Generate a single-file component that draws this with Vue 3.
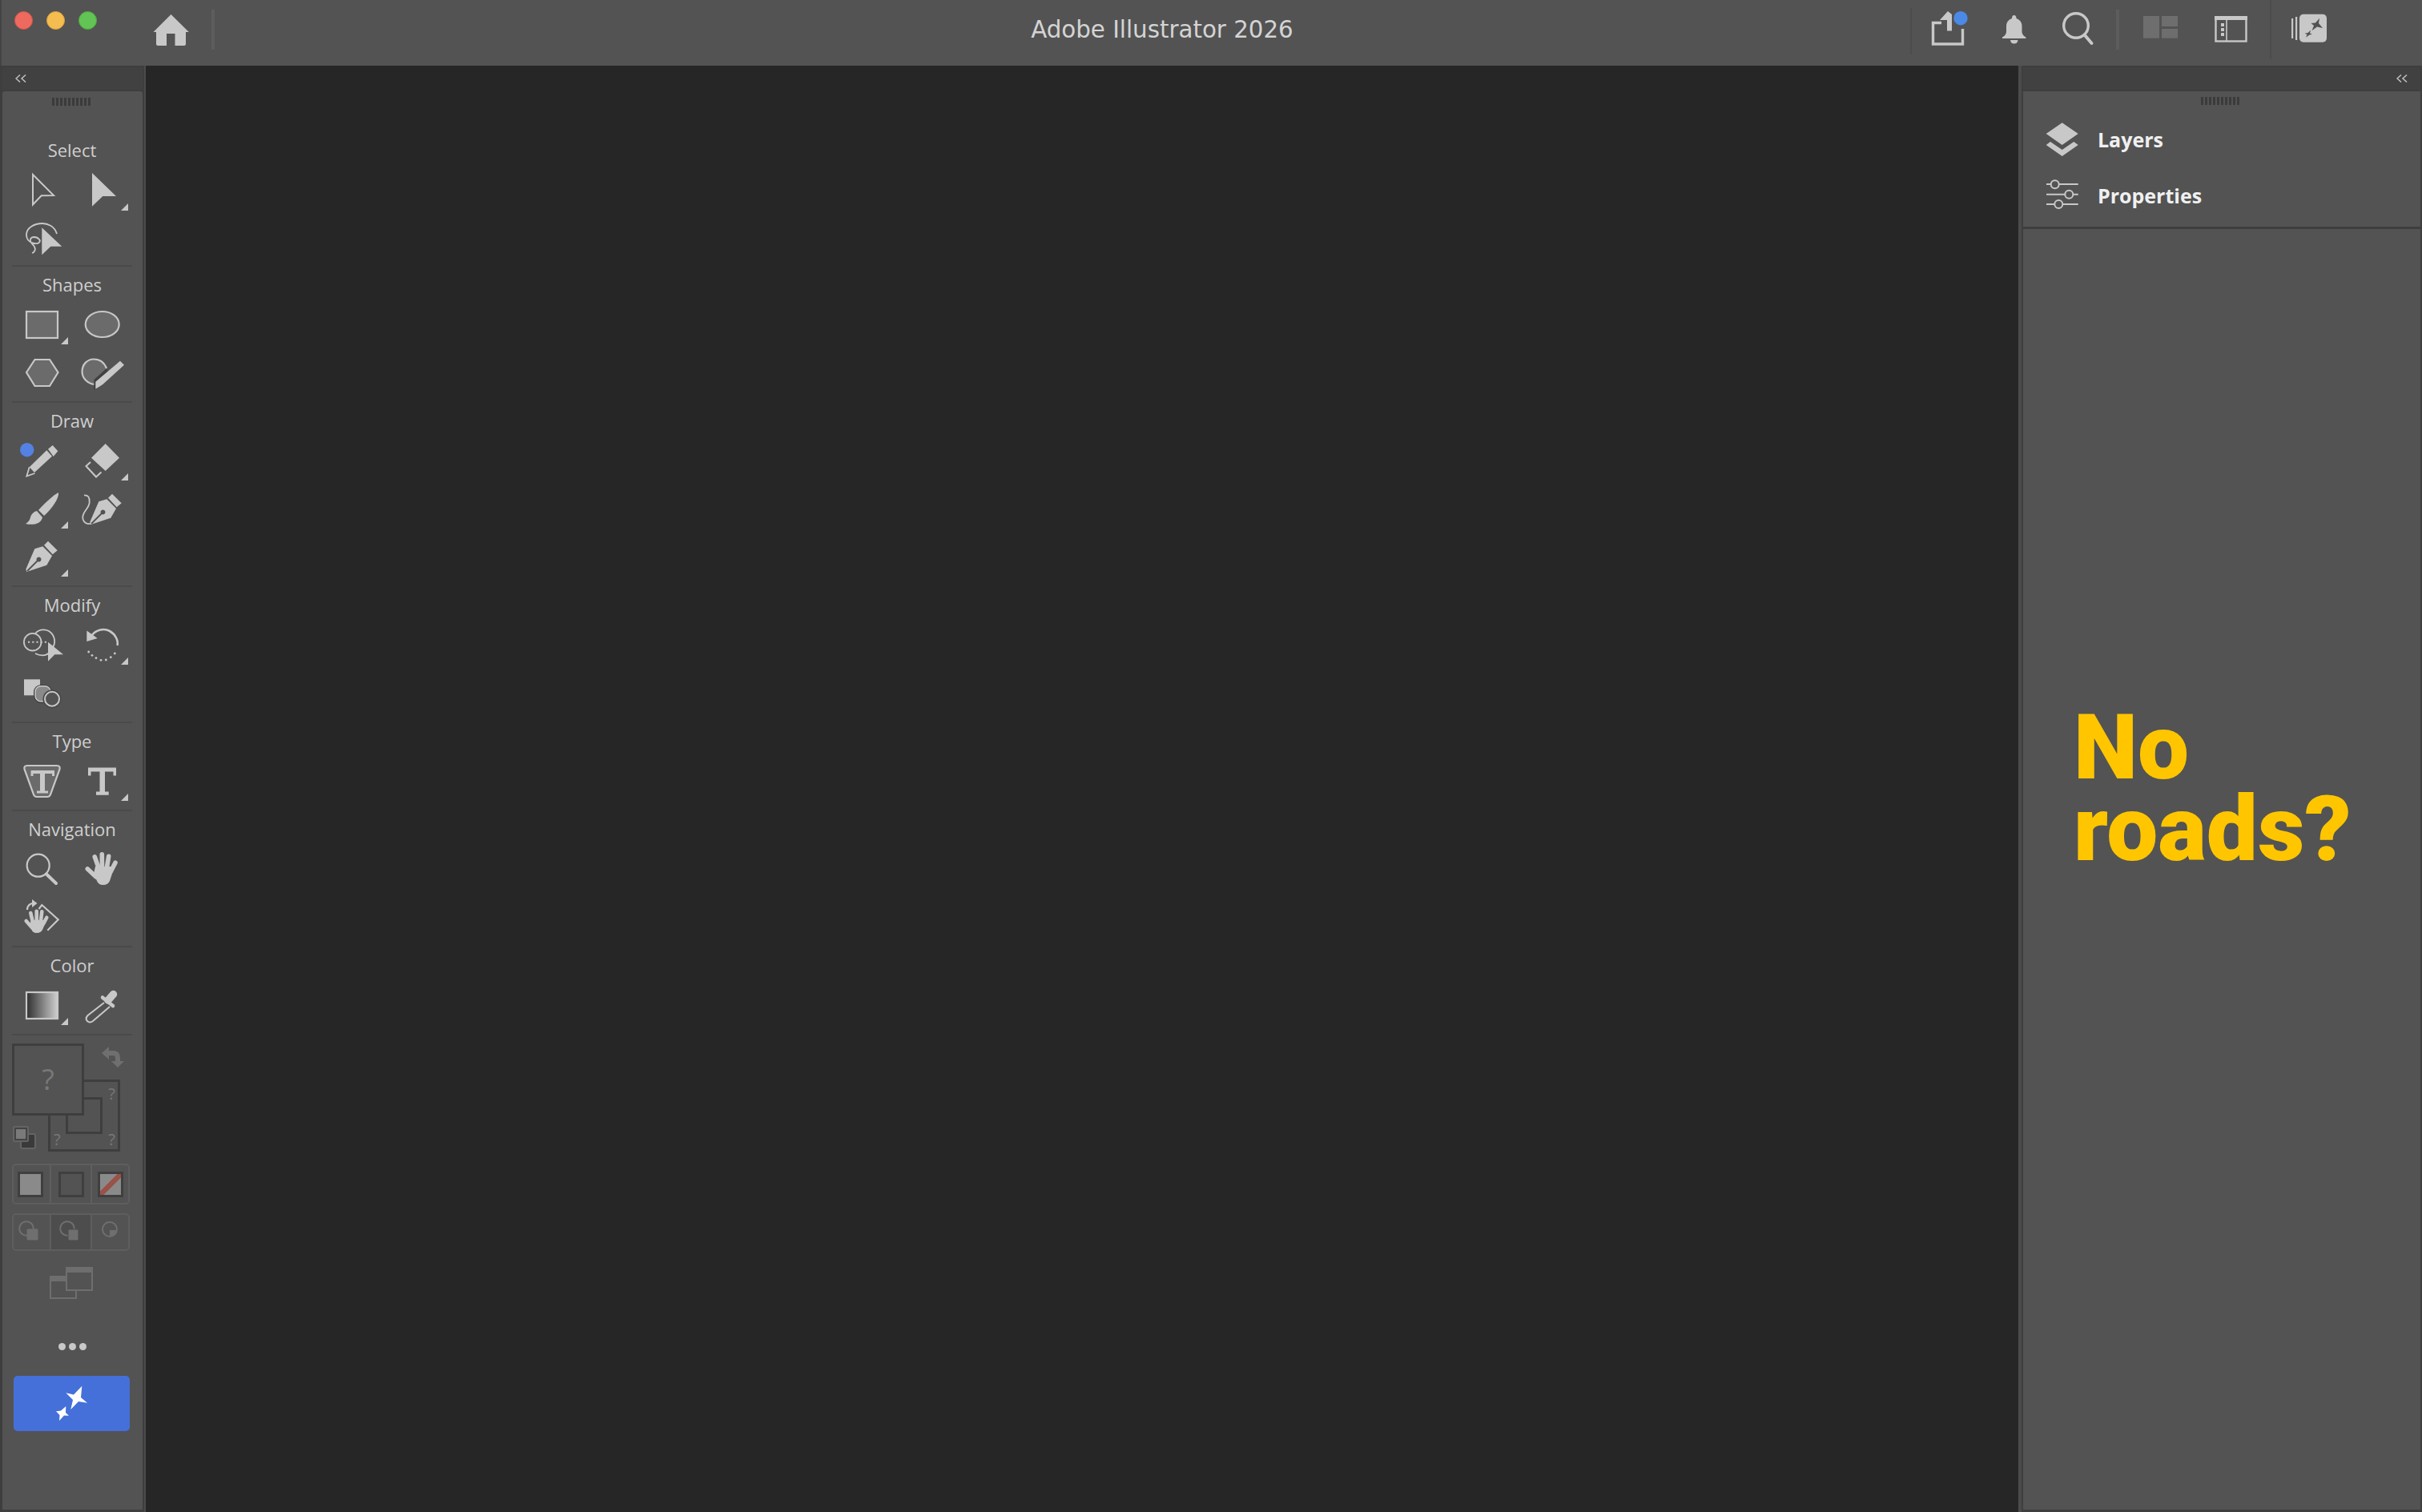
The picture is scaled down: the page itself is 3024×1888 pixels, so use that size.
<script setup>
const lights = ['red', 'amber', 'green']
const rotateDots = [
  [53.3, 41], [48.3, 45.7], [42.3, 49], [36, 49.3], [30, 46.7], [25, 43.3], [20.7, 39]
]
</script>

<template>
  <div class="app">
    <header class="topbar">
      <div class="lights">
        <span v-for="l in lights" :key="l" :class="['light', l]"></span>
      </div>
      <svg class="home" viewBox="190 16 48 42" width="48" height="42">
        <path class="fill" d="M213.5 18 L235.8 40 L232 40 L232 55 Q232 57 230 57 L218.5 57 L218.5 42 L208 42 L208 57 L197 57 Q195 57 195 55 L195 40 L191.5 40 Z" />
      </svg>
      <span class="bar-sep"></span>
      <div class="title">Adobe Illustrator 2026</div>
      <div class="bar-right">
        <span class="faint-sep"></span>
        <svg class="ic share" viewBox="2405 10 55 50" width="55" height="50">
          <path class="line" stroke-width="3.4" fill="none" d="M2424 28.5 L2413.5 28.5 L2413.5 55 L2450.5 55 L2450.5 36" />
          <path class="fill" d="M2432 14 L2437 18 L2437 38.5 L2431 38.5 L2431 25 L2422 25 Z" />
          <circle cx="2448" cy="22.7" r="8.7" fill="#4a8ae6" />
        </svg>
        <svg class="ic bell" viewBox="2495 12 40 48" width="40" height="48">
          <path class="fill" d="M2514.7 19 Q2517.5 19 2517.5 23 Q2524.5 25.5 2524.5 33 L2524.5 40 Q2525 44 2529.4 46.5 L2529.4 48 L2500 48 L2500 46.5 Q2504.4 44 2505 40 L2505 33 Q2505 25.5 2512 23 Q2512 19 2514.7 19 Z" />
          <path class="fill" d="M2510 50 L2519.5 50 Q2519 54.5 2514.7 54.5 Q2510.5 54.5 2510 50 Z" />
        </svg>
        <svg class="ic search" viewBox="2570 12 46 48" width="46" height="48">
          <circle class="line" cx="2592" cy="32" r="15.3" stroke-width="3.4" fill="none" />
          <path class="line" stroke-width="4" stroke-linecap="round" fill="none" d="M2603 44 L2611.5 54" />
        </svg>
        <span class="bar-sep second"></span>
        <svg class="ic layout" viewBox="2672 15 50 38" width="50" height="38">
          <rect x="2676" y="20" width="20" height="27.7" />
          <rect x="2699" y="20" width="20" height="13" />
          <rect x="2699" y="36" width="20" height="11.7" />
        </svg>
        <svg class="ic window" viewBox="2760 15 50 42" width="50" height="42">
          <rect class="line" x="2766.5" y="21.5" width="38" height="30" stroke-width="2.4" fill="none" />
          <rect class="fill" x="2765" y="20" width="41" height="5" />
          <path class="line" stroke-width="1.6" fill="none" d="M2780 25 L2780 51" />
          <rect class="fill" x="2773" y="29" width="4" height="4" />
          <rect class="fill" x="2773" y="35" width="4" height="4" />
          <rect class="fill" x="2773" y="41" width="4" height="4" />
        </svg>
        <span class="faint-sep tall"></span>
        <svg class="ic sparkle" viewBox="2858 12 50 46" width="50" height="46">
          <rect class="fill" x="2861" y="23" width="2.2" height="25" />
          <rect class="fill" x="2866" y="21" width="2.2" height="29" />
          <rect class="fill" x="2871" y="17.7" width="34" height="35" rx="5" />
          <path fill="#535353" d="M2896 22.7 L2895 29 L2900 35 L2893 33.5 L2886.5 38.3 L2889 32 L2885.5 29 L2891 28.5 Z" />
          <path fill="#535353" d="M2885 37.7 L2884 41.5 L2887 42.7 L2883.5 43.5 L2879 46.7 L2880.5 43 L2877.6 41.7 L2881.5 41 Z" />
        </svg>
      </div>
    </header>

    <main class="main">
      <aside class="dock left">
        <div class="strip">
          <svg class="chev" viewBox="0 0 14 10" width="14" height="10">
            <path d="M6 0.5 L1 5 L6 9.5 M13 0.5 L8 5 L13 9.5" />
          </svg>
        </div>
        <div class="panel tools">
          <div class="grip"></div>

          <section class="group first">
            <h3>Select</h3>
            <div class="grid">
              <div class="tool">
                <svg viewBox="0 0 75 60"><path class="line" fill="none" stroke-width="2" d="M26 10 L52 36 L36.7 36.3 L26 47.5 Z" /></svg>
              </div>
              <div class="tool corner">
                <svg viewBox="0 0 75 60"><path class="fill" d="M25 8 L55 37 L38.3 37 L25 49.7 Z" /></svg>
              </div>
              <div class="tool">
                <svg viewBox="0 0 75 60">
                  <path class="line" fill="none" stroke-width="1.8" d="M56 24 C53 14 44 11 38 11 C27 11 18 17 18 25 C18 31 22 35 28 36 C34 37 36 33 34 31 C31 27 24 27 23 31 C22 35 26 37 28 40 C30 44 28 47 25 48" />
                  <path class="fill" d="M37.3 16.3 L62.3 39.7 L48.3 39.7 L37.3 50.3 Z" />
                </svg>
              </div>
            </div>
          </section>

          <section class="group">
            <h3>Shapes</h3>
            <div class="grid">
              <div class="tool corner">
                <svg viewBox="0 0 75 60"><rect class="shape" x="18" y="14" width="39" height="33" /></svg>
              </div>
              <div class="tool">
                <svg viewBox="0 0 75 60"><ellipse class="shape" cx="37.7" cy="30" rx="21" ry="16" /></svg>
              </div>
              <div class="tool">
                <svg viewBox="0 0 75 60"><path class="shape" d="M18 30 L28.5 14 L47 14 L57.5 30 L47 47 L28.5 47 Z" /></svg>
              </div>
              <div class="tool">
                <svg viewBox="0 0 75 60">
                  <path class="shape" d="M43 25 C40 17 34 13.5 27 13.5 C19 13.5 12.5 20 12.5 29 C12.5 38 20 44 28 45" />
                  <path fill="#404040" d="M43 25 L27.5 39 L27 52 L32 50 L45 31 Z" />
                  <path class="fill" d="M60 15.7 L65 20.7 L38.3 45 L29.3 50.7 L29.3 41.7 Z" />
                </svg>
              </div>
            </div>
          </section>

          <section class="group">
            <h3>Draw</h3>
            <div class="grid">
              <div class="tool">
                <svg viewBox="0 0 75 60">
                  <path class="fill" d="M45 15.7 L50.7 11 L57.3 18.3 L51.7 25 Z" />
                  <path class="fill" d="M43.3 17.3 L50 24.7 L28 45 L21.7 38.3 Z" />
                  <path class="line" fill="none" stroke-width="1.8" d="M21.7 38.3 L18.3 49.5 L28.5 46" />
                  <circle cx="18.7" cy="16.7" r="8.7" fill="#5382e2" />
                </svg>
              </div>
              <div class="tool corner">
                <svg viewBox="0 0 75 60">
                  <path class="fill" d="M41.7 9 L59 26.7 L41.7 43 L24 26.7 Z" />
                  <path class="line" fill="none" stroke-width="2" d="M23 32 L17.5 37 L30 50.5 L36.5 44.5" />
                </svg>
              </div>
              <div class="tool corner">
                <svg viewBox="0 0 75 60">
                  <path class="fill" d="M58 10 C59 17 50 30 40 39 L33 32 C42 22 52 13 58 10 Z" />
                  <path class="fill" d="M31 33 C27 34 24 37 23 41 C22 45 20 47 17 49 C25 51 36 50 38 41 Z" />
                </svg>
              </div>
              <div class="tool">
                <svg viewBox="0 0 75 60">
                  <path class="line" fill="none" stroke-width="1.8" d="M15 13.3 C20 13 22 16 21.7 22 C21.5 30 13.3 33 13.3 41 C13.3 47 19 51 25 48.3" />
                  <g transform="translate(5 1)">
                    <path class="fill" d="M40 15.7 L45 10.7 L56.7 22.3 L50.7 27.3 Z" />
                    <path class="fill" fill-rule="evenodd" d="M38.3 17.3 L50 29 L43.3 40.7 L18.3 49 L17.3 45.7 L28.3 20.3 Z M33.5 30.5 A3 3 0 1 0 33.51 30.5 Z" />
                    <path stroke="#535353" stroke-width="1.8" d="M19 48 L32 35" />
                  </g>
                </svg>
              </div>
              <div class="tool corner">
                <svg viewBox="0 0 75 60">
                  <path class="fill" d="M40 15.7 L45 10.7 L56.7 22.3 L50.7 27.3 Z" />
                  <path class="fill" fill-rule="evenodd" d="M38.3 17.3 L50 29 L43.3 40.7 L18.3 49 L17.3 45.7 L28.3 20.3 Z M33.5 30.5 A3 3 0 1 0 33.51 30.5 Z" />
                  <path stroke="#535353" stroke-width="1.8" d="M19 48 L32 35" />
                </svg>
              </div>
            </div>
          </section>

          <section class="group">
            <h3>Modify</h3>
            <div class="grid">
              <div class="tool">
                <svg viewBox="0 0 75 60">
                  <path class="line" fill="none" stroke-width="1.8" d="M29 16 C35 9 46 10 51 18 C55 25 53 33 48 37 M47 40 C42 44 35 44 29 41" />
                  <circle cx="25.7" cy="26.7" r="10.8" fill="none" stroke="#c8c8c8" stroke-width="1.8" />
                  <path fill="none" stroke="#c8c8c8" stroke-width="2" stroke-dasharray="2.2 3" d="M20 26.7 L44 26.7" />
                  <path class="fill" d="M45 26.7 L64 42.3 L53.3 42.3 L45 50.7 Z" />
                </svg>
              </div>
              <div class="tool corner">
                <svg viewBox="0 0 75 60">
                  <path class="line" fill="none" stroke-width="2.6" d="M24 19 C30 11 40 9 47 13 C54 17 58 25 56.5 31" />
                  <path class="fill" d="M18.3 12.5 L18.3 26 L31.7 22 Z" />
                  <circle v-for="(d, i) in rotateDots" :key="i" class="fill" :cx="d[0]" :cy="d[1]" r="1.4" />
                </svg>
              </div>
              <div class="tool">
                <svg viewBox="0 0 75 60">
                  <rect class="fill" x="15" y="13.3" width="20" height="20" />
                  <rect x="27" y="20" width="23" height="23" rx="9" fill="#404040" />
                  <rect x="29" y="21.7" width="19" height="19" rx="7" fill="#8a8a8a" stroke="#c8c8c8" stroke-width="1.4" />
                  <circle cx="50" cy="37.7" r="11.5" fill="#474747" />
                  <circle cx="50" cy="37.7" r="9" fill="#535353" stroke="#c8c8c8" stroke-width="2" />
                </svg>
              </div>
            </div>
          </section>

          <section class="group">
            <h3>Type</h3>
            <div class="grid">
              <div class="tool">
                <svg viewBox="0 0 75 60">
                  <path class="shape" d="M19 11 L56 11 Q60.5 11 59.5 15.5 L48 47 Q47 50 44 50 L31 50 Q28 50 27 47 L15.5 15.5 Q14.5 11 19 11 Z" />
                  <path class="fill" d="M23.5 17 L53 17 L53 24 L50 24 L50 21 L41 21 L41 42.5 L45 42.5 L45 45.5 L31 45.5 L31 42.5 L35 42.5 L35 21 L26.5 21 L26.5 24 L23.5 24 Z" />
                </svg>
              </div>
              <div class="tool corner">
                <svg viewBox="0 0 75 60">
                  <path class="fill" d="M20 13.5 L55 13.5 L55 23.5 L51.5 23.5 L51.5 18.5 L41 18.5 L41 43.5 L45.7 43.5 L45.7 47.7 L30 47.7 L30 43.5 L34.5 43.5 L34.5 18.5 L23.5 18.5 L23.5 23.5 L20 23.5 Z" />
                </svg>
              </div>
            </div>
          </section>

          <section class="group">
            <h3>Navigation</h3>
            <div class="grid">
              <div class="tool">
                <svg viewBox="0 0 75 60">
                  <circle class="line" cx="32.7" cy="25.7" r="14" fill="none" stroke-width="2.2" />
                  <path class="line" fill="none" stroke-width="4" stroke-linecap="round" d="M43 36.5 L55 48" />
                </svg>
              </div>
              <div class="tool">
                <svg viewBox="0 0 75 60">
                  <g class="fingers" stroke-width="5.6">
                    <path d="M28.3 15 L33.3 29" />
                    <path d="M37.3 11.7 L37.5 29" />
                    <path d="M45.7 14.3 L43.3 29" />
                    <path d="M54 22.3 L48.3 33.3" />
                    <path d="M19.3 30 L30 40" />
                  </g>
                  <path class="fill" d="M29 27 L50 27 L51 33 L47 45 Q45 50 38.5 50 Q33 50 31 45 L27 36 Z" />
                </svg>
              </div>
              <div class="tool">
                <svg viewBox="0 0 75 60">
                  <path class="line" fill="none" stroke-width="2.2" d="M33.5 20 L37.3 15 L57.7 33.3 L44.3 46.7" />
                  <path class="line" fill="none" stroke-width="2.2" d="M19 21 C19 15 24 12 29 13" />
                  <path class="fill" d="M25 8 L31.5 13 L25 18 Z" />
                  <g class="fingers" stroke-width="4.6">
                    <path d="M23.3 25 L26 36.7" />
                    <path d="M30.7 22.7 L30.7 36.7" />
                    <path d="M37.3 23.3 L35.7 36.7" />
                    <path d="M43.3 30.7 L39.3 38.3" />
                    <path d="M17.7 35 L25 43.3" />
                  </g>
                  <path class="fill" d="M24 34 L41 34 L41.5 38 L38 46 Q36 50 30.7 50 Q26 50 24.5 46 L22 40 Z" />
                </svg>
              </div>
            </div>
          </section>

          <section class="group">
            <h3>Color</h3>
            <div class="grid">
              <div class="tool corner">
                <svg viewBox="0 0 75 60">
                  <defs>
                    <linearGradient id="grad" x1="0" x2="1" y1="0" y2="0">
                      <stop offset="0" stop-color="#2f2f2f" />
                      <stop offset="1" stop-color="#cfcfcf" />
                    </linearGradient>
                  </defs>
                  <rect x="18" y="14" width="39" height="33" fill="url(#grad)" stroke="#c8c8c8" stroke-width="2.2" />
                </svg>
              </div>
              <div class="tool">
                <svg viewBox="0 0 75 60">
                  <path class="line" fill="none" stroke-width="2" d="M40 27 L19.5 43 Q16 47 19 50 Q22 53 26 50 L47 32" />
                  <path class="line" fill="none" stroke-width="4.5" stroke-linecap="round" d="M38 20.5 L51 31" />
                  <path class="line" fill="none" stroke-width="9.5" stroke-linecap="round" d="M51.5 16.5 L45 24" />
                </svg>
              </div>
            </div>
          </section>

          <div class="swatches">
            <div class="fill-box">?</div>
            <div class="stroke-box">
              <span class="stroke-inner"></span>
              <span class="q q-tr">?</span>
              <span class="q q-bl">?</span>
              <span class="q q-br">?</span>
            </div>
            <svg class="swap" viewBox="0 0 28 28" width="28" height="28">
              <path fill="#6f6f6f" d="M0 9 L9 1 L9 6 L16 6 Q23 7 23 15 L23 19 L28 19 L20 27 L12 19 L17 19 L17 15 Q17 12 14 12 L9 12 L9 17 Z" />
            </svg>
            <svg class="defaults" viewBox="0 0 30 30" width="30" height="30">
              <rect x="11" y="11" width="18" height="18" rx="2" fill="#3a3a3a" stroke="#646464" stroke-width="2" />
              <rect x="1" y="1" width="20" height="20" rx="2" fill="#646464" />
              <rect x="4" y="4" width="14" height="14" fill="#7a7a7a" stroke="#444" stroke-width="2" />
            </svg>
          </div>

          <div class="seg modes">
            <div class="seg-cell"><span class="sw solid"></span></div>
            <div class="seg-cell"><span class="sw"></span></div>
            <div class="seg-cell"><span class="sw none"></span></div>
          </div>

          <div class="seg draws">
            <div class="seg-cell">
              <svg viewBox="0 0 40 40" width="40" height="40">
                <circle cx="15" cy="15" r="8.8" fill="none" stroke="#6f6f6f" stroke-width="2" />
                <rect x="15.5" y="15.5" width="14" height="14" rx="1" fill="#6f6f6f" />
              </svg>
            </div>
            <div class="seg-cell dark">
              <svg viewBox="0 0 40 40" width="40" height="40">
                <circle cx="15" cy="15" r="8.8" fill="none" stroke="#6f6f6f" stroke-width="2" />
                <rect x="16" y="16" width="13" height="14" rx="1" fill="#6f6f6f" stroke="#4c4c4c" stroke-width="1" />
              </svg>
            </div>
            <div class="seg-cell">
              <svg viewBox="0 0 40 40" width="40" height="40">
                <circle cx="19" cy="16" r="9" fill="none" stroke="#6f6f6f" stroke-width="2" />
                <path fill="#6f6f6f" d="M19 17 L27 17 Q27 23 19 25 Z" />
              </svg>
            </div>
          </div>

          <svg class="screens" viewBox="0 0 54 40" width="54" height="40">
            <rect x="1" y="12" width="32" height="27" fill="#535353" stroke="#6e6e6e" stroke-width="2" />
            <rect x="1" y="12" width="32" height="6" fill="#6e6e6e" />
            <rect x="21" y="1" width="32" height="28" fill="#535353" stroke="#6e6e6e" stroke-width="2" />
            <rect x="21" y="1" width="32" height="6" fill="#6e6e6e" />
          </svg>

          <div class="more"><span></span><span></span><span></span></div>

          <div class="gen">
            <svg viewBox="0 0 145 69" width="145" height="69">
              <path fill="#fff" d="M65.3 21.3 L75 23.5 L85.3 12.7 L84 27 L92 33.7 L81 32 L71.3 42 L74 30 Z" />
              <path fill="#fff" d="M53 44.3 L59 43.5 L65.3 38 L65 46 L69 49.7 L63 49.5 L57 56 L57.5 49 Z" />
            </svg>
          </div>
        </div>
      </aside>

      <div class="canvas"></div>

      <aside class="dock right">
        <div class="strip end">
          <svg class="chev" viewBox="0 0 14 10" width="14" height="10">
            <path d="M6 0.5 L1 5 L6 9.5 M13 0.5 L8 5 L13 9.5" />
          </svg>
        </div>
        <div class="panel collapsed">
          <div class="grip"></div>
          <div class="row">
            <svg viewBox="2553 150 44 46" width="44" height="46">
              <path class="fill" d="M2574.7 152.3 L2594.7 166 L2574.7 180 L2554.7 166 Z" />
              <path class="fill" d="M2554.7 180 L2560 176 L2574.7 186 L2589.3 176 L2594.7 180 L2574.7 194 Z" />
            </svg>
            <span>Layers</span>
          </div>
          <div class="row">
            <svg viewBox="2553 222 44 44" width="44" height="44">
              <g class="line" stroke-width="2" fill="none">
                <path d="M2555 230 L2560.5 230 M2571 230 L2594.7 230" />
                <path d="M2555 242.7 L2578 242.7 M2588.5 242.7 L2594.7 242.7" />
                <path d="M2555 255 L2565 255 M2575.5 255 L2594.7 255" />
                <circle cx="2565.7" cy="230.3" r="5" />
                <circle cx="2583.3" cy="242.7" r="5" />
                <circle cx="2570.3" cy="255" r="5" />
              </g>
            </svg>
            <span>Properties</span>
          </div>
        </div>
        <div class="panel note">
          <p>No<br />roads?</p>
        </div>
      </aside>
    </main>
  </div>
</template>

<style scoped>
.app {
  width: 3024px;
  height: 1888px;
  display: flex;
  flex-direction: column;
  background: #3d3d3d;
  overflow: hidden;
  font-family: "Open Sans", "Liberation Sans", sans-serif;
}

.topbar {
  height: 82px;
  flex: none;
  display: flex;
  align-items: flex-start;
  background: #535353;
  border-left: 2px solid #444;
  box-sizing: border-box;
}

.lights {
  display: flex;
  gap: 17px;
  margin: 14px 0 0 16px;
}

.light {
  width: 23px;
  height: 23px;
  border-radius: 50%;
  box-sizing: border-box;
}

.red { background: #ee6a5f; border: 1px solid #d2544a; }
.amber { background: #f5bd4f; border: 1px solid #d9a03e; }
.green { background: #61c454; border: 1px solid #52a942; }

.home {
  margin: 16px 0 0 69px;
  flex: none;
}

.bar-sep {
  width: 4px;
  height: 50px;
  margin: 12px 0 0 26px;
  background: #5d5d5d;
  flex: none;
}

.title {
  width: 2117px;
  flex: none;
  padding-left: 249px;
  box-sizing: border-box;
  text-align: center;
  font-family: "DejaVu Sans", sans-serif;
  font-size: 29.3px;
  line-height: 74px;
  color: #d4d4d4;
}

.bar-right {
  display: flex;
  align-items: flex-start;
}

.faint-sep {
  width: 2px;
  height: 58px;
  margin-top: 10px;
  background: #4c4c4c;
  flex: none;
}

.faint-sep.tall {
  height: 74px;
  margin: 0 0 0 24px;
}

.ic { flex: none; }
.share { margin: 10px 0 0 18px; }
.bell { margin: 12px 0 0 35px; }
.search { margin: 12px 0 0 35px; }
.layout { margin: 15px 0 0 26px; }
.layout rect { fill: #6e6e6e; }
.window { margin: 15px 0 0 38px; }
.sparkle { margin: 12px 0 0 22px; }

.fill { fill: #c8c8c8; }
.line { stroke: #c8c8c8; }
.shape { fill: #6b6b6b; stroke: #c8c8c8; stroke-width: 2.2; }
.fingers path { stroke: #c8c8c8; stroke-linecap: round; fill: none; }

.main {
  flex: 1;
  display: flex;
  min-height: 0;
}

.dock {
  flex: none;
  display: flex;
  flex-direction: column;
  padding-top: 2px;
  box-sizing: border-box;
  background: #3e3e3e;
}

.dock.left {
  width: 182px;
  padding-left: 3px;
  padding-right: 2px;
  padding-bottom: 3px;
  border-right: 2px solid #4b4b4b;
}

.dock.right {
  width: 504px;
  padding-left: 2px;
  padding-right: 2px;
  padding-bottom: 3px;
  border-left: 4px solid #4b4b4b;
}

.canvas {
  flex: 1;
  background: #262626;
}

.strip {
  height: 28px;
  flex: none;
  margin-bottom: 2px;
  display: flex;
  align-items: center;
  padding: 0 16px;
  background: #414141;
}

.strip.end {
  justify-content: flex-end;
}

.chev path {
  fill: none;
  stroke: #c0c0c0;
  stroke-width: 1.5;
}

.panel {
  background: #535353;
  flex: none;
}

.tools {
  flex: 1;
  display: flex;
  flex-direction: column;
  border-radius: 3px 3px 0 0;
}

.grip {
  width: 48px;
  height: 10px;
  margin: 8px auto 0;
  background: repeating-linear-gradient(90deg, #3b3b3b 0 3px, transparent 3px 5px);
}

.tools .grip {
  margin-bottom: 33px;
  margin-left: 62px;
}

.group {
  margin: 0 12px;
  padding: 0 0 6px;
  width: 150px;
  border-bottom: 2px solid #4a4a4a;
}

.group.first {
  padding-bottom: 3px;
}

.group.first h3 {
  margin-bottom: 6px;
}

.group h3 {
  margin: 7px 0 5px;
  height: 30px;
  line-height: 30px;
  text-align: center;
  font-size: 22px;
  font-weight: 500;
  color: #cfcfcf;
}

.grid {
  display: grid;
  grid-template-columns: 75px 75px;
  grid-auto-rows: 60px;
}

.tool {
  position: relative;
}

.tool svg {
  display: block;
  width: 75px;
  height: 60px;
}

.corner::after {
  content: "";
  position: absolute;
  right: 5px;
  bottom: 5px;
  width: 0;
  height: 0;
  border-left: 9px solid transparent;
  border-bottom: 9px solid #c8c8c8;
}

.swatches {
  position: relative;
  width: 150px;
  height: 134px;
  margin: 10px 0 0 12px;
  flex: none;
}

.fill-box {
  position: absolute;
  left: 0;
  top: 0;
  z-index: 2;
  width: 90px;
  height: 90px;
  box-sizing: border-box;
  border: 3px solid #3e3e3e;
  background: #535353;
  color: #787878;
  font-size: 36px;
  line-height: 84px;
  text-align: center;
}

.stroke-box {
  position: absolute;
  left: 45px;
  top: 45px;
  width: 90px;
  height: 90px;
  box-sizing: border-box;
  border: 3px solid #3e3e3e;
}

.stroke-inner {
  position: absolute;
  left: 19px;
  top: 19px;
  width: 46px;
  height: 46px;
  box-sizing: border-box;
  border: 3px solid #3e3e3e;
}

.q {
  position: absolute;
  color: #787878;
  font-size: 20px;
  line-height: 20px;
}

.q-tr { right: 3px; top: 5px; }
.q-bl { left: 4px; bottom: 2px; }
.q-br { right: 3px; bottom: 2px; }

.swap {
  position: absolute;
  left: 112px;
  top: 3px;
}

.defaults {
  position: absolute;
  left: 0;
  top: 102px;
}

.seg {
  width: 147px;
  margin-left: 12px;
  flex: none;
  display: grid;
  grid-template-columns: 45px 51px 1fr;
  box-sizing: border-box;
  border: 2px solid #5e5e5e;
  border-radius: 5px;
}

.modes {
  height: 51px;
  margin-top: 16px;
}

.draws {
  height: 47px;
  margin-top: 11px;
}

.seg-cell {
  display: flex;
  align-items: center;
  justify-content: center;
  border-left: 2px solid #5e5e5e;
}

.seg-cell:first-child {
  border-left: none;
  padding-right: 3px;
}

.seg-cell.dark {
  background: #4d4d4d;
}

.sw {
  width: 32px;
  height: 32px;
  box-sizing: border-box;
  border: 3px solid #3f3f3f;
  background: #535353;
}

.sw.solid {
  background: #8a8a8a;
}

.sw.none {
  background: linear-gradient(135deg, #8a8a8a 0 42%, #9a5248 42% 58%, #8a8a8a 58%);
}

.screens {
  flex: none;
  margin: 20px 0 0 59px;
}

.more {
  flex: none;
  display: flex;
  justify-content: center;
  gap: 4px;
  margin-top: 55px;
}

.more span {
  width: 9px;
  height: 9px;
  border-radius: 50%;
  background: #c8c8c8;
}

.gen {
  flex: none;
  width: 145px;
  height: 69px;
  margin: 32px 0 0 14px;
  border-radius: 5px;
  background: #4570d9;
}

.gen svg {
  display: block;
}

.collapsed {
  height: 169px;
  margin-bottom: 3px;
}

.collapsed .grip {
  margin: 7px 0 8px 222px;
}

.row {
  height: 70px;
  display: flex;
  align-items: center;
  gap: 22px;
  padding-left: 27px;
  font-size: 25px;
  font-weight: 700;
  color: #f0f0f0;
}

.row svg {
  flex: none;
}

.note {
  flex: 1;
  padding: 596px 0 0 63px;
}

.note p {
  margin: 0;
  font-family: Roboto, "Liberation Sans", sans-serif;
  font-weight: 900;
  font-size: 114px;
  line-height: 102px;
  color: #ffc600;
}
</style>

<style>
html,
body {
  background: #3d3d3d;
  overflow: hidden;
}
</style>
